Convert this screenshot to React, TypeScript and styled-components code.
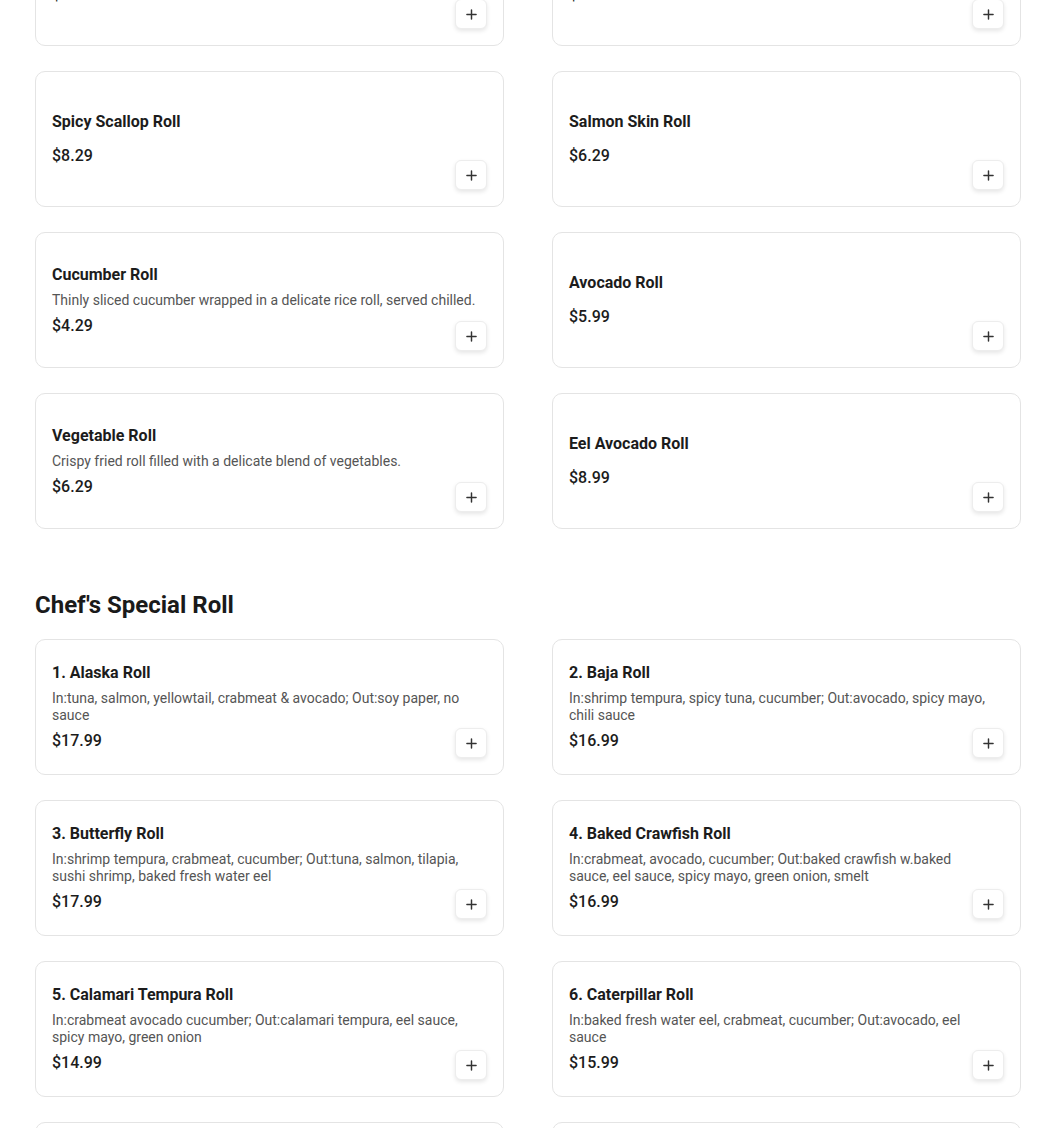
import { useLayoutEffect, useRef } from "react";
import styled, { createGlobalStyle } from "styled-components";

const GlobalStyle = createGlobalStyle`
  html, body {
    margin: 0;
    padding: 0;
    background: #fff;
    font-family: Roboto, "Noto Sans", Arial, sans-serif;
    color: #1f1f1f;
  }
  * { box-sizing: border-box; }
`

const Page = styled.div`
  padding: 24px 29px 80px 35px;
`

const Section = styled.section`
  margin-bottom: 60px;
`

const SectionTitle = styled.h2`
  margin: 0 0 18px;
  font-size: 24px;
  line-height: 32px;
  font-weight: 700;
  color: #1a1a1a;
`

const Grid = styled.div`
  display: grid;
  grid-template-columns: 1fr 1fr;
  column-gap: 48px;
  row-gap: 25px;
`

const Card = styled.div`
  display: grid;
  min-height: 136px;
  padding: 17px 16px 16px;
  border: 1px solid #e4e4e4;
  border-radius: 10px;
  background: #fff;
`

const Info = styled.div`
  grid-area: 1 / 1;
  align-self: center;
  display: flex;
  flex-direction: column;
  padding-right: 11px;
`

const Name = styled.div`
  font-size: 16px;
  line-height: 20px;
  font-weight: 700;
  color: #1c1c1c;
`

const Desc = styled.div`
  margin-top: 7px;
  font-size: 14px;
  line-height: 17px;
  color: #555;
`

const Price = styled.div<{ $hasDesc: boolean }>`
  margin-top: ${(p) => (p.$hasDesc ? "6px" : "13px")};
  font-size: 16px;
  line-height: 22px;
  font-weight: 500;
  color: #1c1c1c;
`

const AddButton = styled.button`
  grid-area: 1 / 1;
  justify-self: end;
  align-self: end;
  width: 32px;
  height: 30px;
  padding: 0;
  display: flex;
  align-items: center;
  justify-content: center;
  border: 1px solid #ededed;
  border-radius: 6px;
  background: #fff;
  box-shadow: 0 2px 4px rgba(0, 0, 0, 0.1);
  color: #333;
  cursor: pointer;
`

type Item = { name: string; price: string; desc?: string }

const rolls: Item[] = [
  { name: "California Roll", price: "$4.29" },
  { name: "Spicy Tuna Roll", price: "$5.79" },
  { name: "Tuna Roll", price: "$4.29" },
  { name: "Salmon Roll", price: "$5.79" },
  { name: "Spicy Scallop Roll", price: "$8.29" },
  { name: "Salmon Skin Roll", price: "$6.29" },
  { name: "Cucumber Roll", price: "$4.29", desc: "Thinly sliced cucumber wrapped in a delicate rice roll, served chilled." },
  { name: "Avocado Roll", price: "$5.99" },
  { name: "Vegetable Roll", price: "$6.29", desc: "Crispy fried roll filled with a delicate blend of vegetables." },
  { name: "Eel Avocado Roll", price: "$8.99" },
]

const specials: Item[] = [
  { name: "1. Alaska Roll", price: "$17.99", desc: "In:tuna, salmon, yellowtail, crabmeat & avocado; Out:soy paper, no sauce" },
  { name: "2. Baja Roll", price: "$16.99", desc: "In:shrimp tempura, spicy tuna, cucumber; Out:avocado, spicy mayo, chili sauce" },
  { name: "3. Butterfly Roll", price: "$17.99", desc: "In:shrimp tempura, crabmeat, cucumber; Out:tuna, salmon, tilapia, sushi shrimp, baked fresh water eel" },
  { name: "4. Baked Crawfish Roll", price: "$16.99", desc: "In:crabmeat, avocado, cucumber; Out:baked crawfish w.baked sauce, eel sauce, spicy mayo, green onion, smelt" },
  { name: "5. Calamari Tempura Roll", price: "$14.99", desc: "In:crabmeat avocado cucumber; Out:calamari tempura, eel sauce, spicy mayo, green onion" },
  { name: "6. Caterpillar Roll", price: "$15.99", desc: "In:baked fresh water eel, crabmeat, cucumber; Out:avocado, eel sauce" },
  { name: "7. Crazy Roll", price: "$15.99", desc: "In:shrimp tempura, crabmeat, cucumber; Out:salmon, avocado, eel sauce" },
  { name: "8. Dragon Roll", price: "$16.99", desc: "In:shrimp tempura, cucumber; Out:baked fresh water eel, avocado, eel sauce" },
]

const PlusIcon = () => (
  <svg width="11" height="11" viewBox="0 0 12 12" fill="none">
    <path d="M6 1v10M1 6h10" stroke="currentColor" strokeWidth="1.6" strokeLinecap="round" />
  </svg>
)

const MenuCard = ({ item, cardRef }: { item: Item; cardRef?: React.Ref<HTMLDivElement> }) => (
  <Card ref={cardRef}>
    <Info>
      <Name>{item.name}</Name>
      {item.desc && <Desc>{item.desc}</Desc>}
      <Price $hasDesc={!!item.desc}>{item.price}</Price>
    </Info>
    <AddButton aria-label={`Add ${item.name}`}>
      <PlusIcon />
    </AddButton>
  </Card>
)

export default function App() {
  const anchor = useRef<HTMLDivElement>(null)

  useLayoutEffect(() => {
    // the shot is taken with the list scrolled so that Spicy Scallop sits at y=71
    const el = anchor.current
    if (el) window.scrollTo(0, el.getBoundingClientRect().top + window.scrollY - 71)
  }, [])

  return (
    <>
      <GlobalStyle />
      <Page>
        <Section>
          <SectionTitle>Maki Roll</SectionTitle>
          <Grid>
            {rolls.map((r, i) => (
              <MenuCard key={r.name} item={r} cardRef={i === 4 ? anchor : undefined} />
            ))}
          </Grid>
        </Section>
        <Section>
          <SectionTitle>Chef's Special Roll</SectionTitle>
          <Grid>
            {specials.map((r) => (
              <MenuCard key={r.name} item={r} />
            ))}
          </Grid>
        </Section>
      </Page>
    </>
  )
}
